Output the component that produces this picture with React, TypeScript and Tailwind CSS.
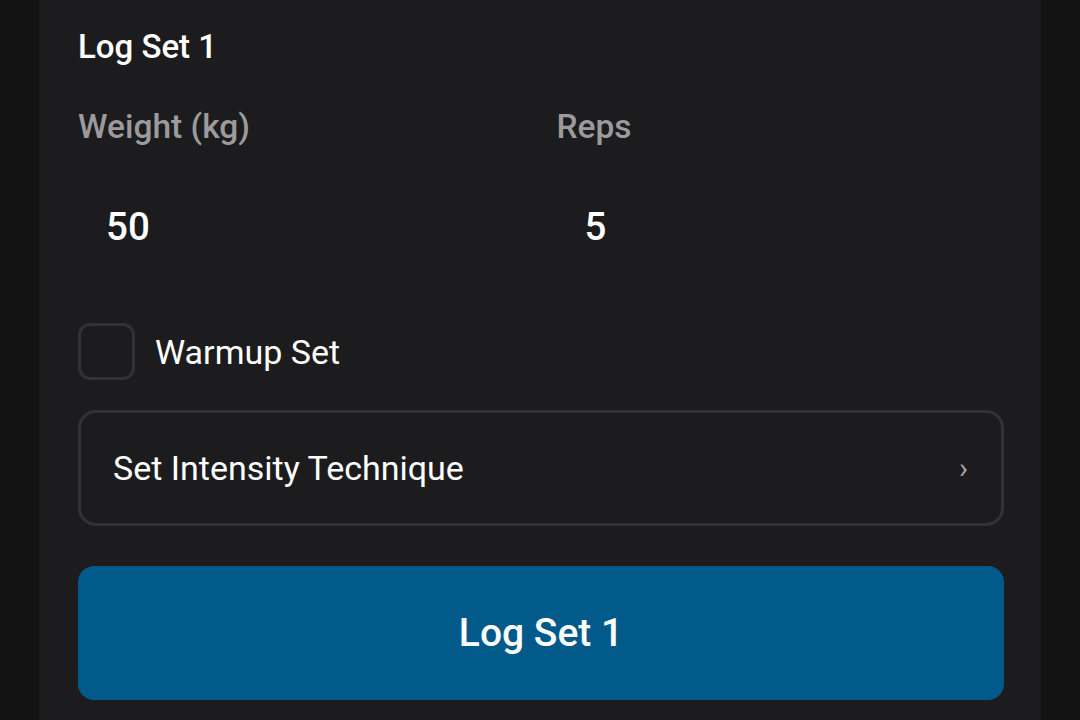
export default function App() {
    return (
        <div className="h-[720px] w-[1080px] overflow-hidden bg-[#121212]" style={{ fontFamily: 'Roboto, "Noto Sans", sans-serif' }}>
            <div className="mx-[39px] h-full bg-[#1c1c1e] pl-[39px] pr-[37px] pt-[26px]">
                <h2 className="text-[33px] font-medium leading-[42px] text-white">Log Set 1</h2>

                <div className="mt-[37px] grid grid-cols-2 gap-x-[31px]">
                    <div>
                        <label className="block text-[33.5px] font-medium leading-[44px] text-[#9b9b9d]">Weight (kg)</label>
                        <div className="mt-[48px] h-[60px] pl-[28px] text-[38.5px] font-medium leading-[60px] text-white">50</div>
                    </div>
                    <div>
                        <label className="block text-[33.5px] font-medium leading-[44px] text-[#9b9b9d]">Reps</label>
                        <div className="mt-[48px] h-[60px] pl-[28px] text-[38.5px] font-medium leading-[60px] text-white">5</div>
                    </div>
                </div>

                <label className="mt-[66px] flex items-center gap-[20px]">
                    <span className="h-[57px] w-[57px] rounded-[12px] border-[3px] border-[#323234]" />
                    <span className="text-[34px] leading-[44px] text-white">Warmup Set</span>
                </label>

                <div className="mt-[30px] flex h-[116px] items-center justify-between rounded-[18px] border-[3px] border-[#323234] pl-[32px] pr-[33px]">
                    <span className="text-[34px] leading-[44px] text-white">Set Intensity Technique</span>
                    <span className="text-[30px] leading-none text-[#a5a5a7]">›</span>
                </div>

                <button className="mt-[40px] flex h-[134px] w-full items-center justify-center rounded-[16px] bg-[#025a8a] text-[39px] font-medium text-white">
                    Log Set 1
                </button>
            </div>
        </div>
    );
}
